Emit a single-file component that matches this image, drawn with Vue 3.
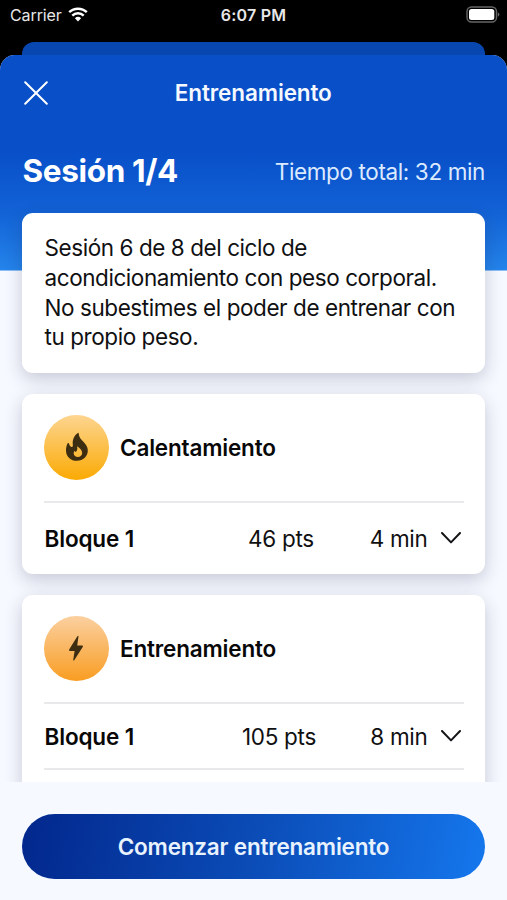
<script setup>
const sections = [
  { title: 'Calentamiento', kind: 'fire', more: false, blocks: [{ name: 'Bloque 1', points: '46 pts', time: '4 min' }] },
  { title: 'Entrenamiento', kind: 'bolt', more: true, blocks: [{ name: 'Bloque 1', points: '105 pts', time: '8 min' }] },
]
</script>

<template>
  <div class="phone">
    <div class="status">
      <div class="carrier">
        <span>Carrier</span>
        <svg class="wifi" viewBox="0 0 20 15" width="20" height="15">
          <path d="M1.2 5.2 A12.8 12.8 0 0 1 18.8 5.2" />
          <path d="M4.3 8.6 A8.2 8.2 0 0 1 15.7 8.6" />
          <path class="dot" d="M10 14.4 L6.9 11.3 A4.5 4.5 0 0 1 13.1 11.3 Z" />
        </svg>
      </div>
      <span class="clock">6:07 PM</span>
      <svg class="battery" viewBox="0 0 34 17" width="34" height="17">
        <rect x="1" y="1" width="29.5" height="15" rx="4.5" class="case" />
        <rect x="3" y="3" width="25.3" height="11" rx="2.5" fill="#fff" />
        <path d="M31.8 6.2 Q33.4 7 33.4 8.5 Q33.4 10 31.8 10.8 Z" fill="#666" />
      </svg>
    </div>
    <div class="behind"></div>
    <main class="sheet">
      <div class="scroll">
        <header class="nav">
          <svg class="close" viewBox="0 0 24 24" width="24" height="24">
            <path d="M1.2 1.2 L22.8 22.8 M22.8 1.2 L1.2 22.8" />
          </svg>
          <h1>Entrenamiento</h1>
          <span></span>
        </header>
        <div class="session">
          <h2>Sesión 1/4</h2>
          <span class="total">Tiempo total: 32 min</span>
        </div>
        <div class="cards">
          <section class="card intro">
            <p>Sesión 6 de 8 del ciclo de<br />acondicionamiento con peso corporal.<br />No subestimes el poder de entrenar con<br />tu propio peso.</p>
          </section>
          <section v-for="s in sections" :key="s.title" class="card">
            <div class="heading">
              <div class="badge" :class="s.kind">
                <svg v-if="s.kind === 'fire'" viewBox="0 0 24 30" width="24" height="30">
                  <path fill-rule="evenodd" d="M12.9 .9 C13.4 .6 13.7 1 13.7 1.6 C13.9 5.4 16 7.4 18.6 10 C21.1 12.5 22.8 15 22.8 18.6 C22.8 24.5 18.2 28.8 12 28.8 C5.8 28.8 1 24.6 1 18.4 C1 15.6 1.6 13.2 2.7 11.3 C3.1 10.7 3.8 10.8 4 11.5 C4.4 13.2 5.2 14.6 6.6 15 C7.8 15.2 8 14.2 7.8 12.6 C7.3 7.6 9.2 3.2 12.9 .9 Z M12 14.2 C13 17.2 11.9 18.5 10.8 20 C10.2 19.7 9.7 19.2 9.5 18.7 C8.9 19.7 8.6 20.6 8.7 21.6 C8.9 23.8 10.6 25.1 12.8 25.1 C15.4 25.1 17.3 23.3 17.2 20.8 C17 17.7 14.5 15.8 12 14.2 Z" />
                </svg>
                <svg v-else viewBox="0 0 16 27" width="16" height="27">
                  <path d="M9.4 1.3 Q10.7 .1 10.4 1.9 L9.2 10.5 L14.2 10.5 Q15.6 10.8 14.7 12 L6.4 25 Q5.1 26.5 5.3 24.6 L6.6 15.9 L1.8 15.9 Q.4 15.6 1.3 14.3 Z" />
                </svg>
              </div>
              <h3>{{ s.title }}</h3>
            </div>
            <div v-for="b in s.blocks" :key="b.name" class="block" :class="{ single: !s.more }">
              <strong>{{ b.name }}</strong>
              <span class="points">{{ b.points }}</span>
              <span class="time">{{ b.time }}</span>
              <svg class="chevron" viewBox="0 0 20 12" width="20" height="12">
                <path d="M1 1 L10 10.4 L19 1" />
              </svg>
            </div>
            <div v-if="s.more" class="block"></div>
          </section>
        </div>
      </div>
      <footer>
        <button type="button">Comenzar entrenamiento</button>
      </footer>
    </main>
  </div>
</template>

<style>
body {
  margin: 0;
  background: #000;
}
</style>

<style scoped>
.phone {
  width: 507px;
  height: 900px;
  overflow: hidden;
  display: flex;
  flex-direction: column;
  background: #000;
  color: #101012;
  font-family: Inter, "Liberation Sans", sans-serif;
  font-size: 22.5px;
  letter-spacing: -0.43px;
}
h1, h2, h3, p {
  margin: 0;
}
svg {
  display: block;
}
.status {
  height: 30px;
  flex: none;
  margin-bottom: 11.5px;
  padding: 0 8px 0 10px;
  display: grid;
  grid-template-columns: 1fr auto 1fr;
  align-items: center;
  color: #e8e8e8;
  font-size: 16px;
  letter-spacing: -0.1px;
}
.carrier {
  display: flex;
  align-items: center;
  gap: 6px;
}
.wifi {
  margin-top: -1px;
}
.wifi path {
  fill: none;
  stroke: #fff;
  stroke-width: 2.5;
}
.wifi .dot {
  fill: #fff;
  stroke: none;
}
.clock {
  margin-right: 2px;
  font-weight: 600;
  letter-spacing: 0.2px;
}
.battery {
  justify-self: end;
  margin: -2px -1px 0 0;
}
.battery .case {
  fill: none;
  stroke: #666;
  stroke-width: 1.4;
}
.behind {
  height: 13.5px;
  flex: none;
  margin: 0 22px;
  border-radius: 12px 12px 0 0;
  background: #0747af;
}
.sheet {
  flex: 1;
  min-height: 0;
  display: flex;
  flex-direction: column;
  overflow: hidden;
  border-radius: 15px 15px 0 0;
  background: #f6f9ff;
}
.scroll {
  height: 727px;
  flex: none;
  overflow: hidden;
  background: linear-gradient(#084fc8 0, #084fc8 95px, #1261d5 155px, #2484eb 215px) 0 0 / 100% 215.5px no-repeat;
}
.nav {
  height: 75px;
  padding: 0 24.5px 0 24px;
  display: grid;
  grid-template-columns: 1fr auto 1fr;
  align-items: center;
  color: #f4f8ff;
}
.close path {
  fill: none;
  stroke: #fff;
  stroke-width: 2;
  stroke-linecap: round;
}
h1 {
  font-size: 22.5px;
  font-weight: 600;
  letter-spacing: -0.12px;
}
.session {
  height: 82.5px;
  padding: 0 22px 0 22.5px;
  display: flex;
  align-items: center;
  justify-content: space-between;
  color: #fff;
}
h2 {
  font-size: 31.5px;
  font-weight: 700;
  letter-spacing: -0.35px;
  line-height: 36px;
}
.total {
  color: #dceaff;
  letter-spacing: -0.38px;
}
.cards {
  padding: 0 22px;
  display: flex;
  flex-direction: column;
  gap: 21.5px;
}
.card {
  flex: none;
  padding: 0 21.5px 0 22px;
  border-radius: 11px;
  background: #fff;
  box-shadow: 0 6px 18px rgba(30, 30, 70, 0.22);
}
.intro {
  height: 160px;
  display: flex;
  align-items: center;
  padding-left: 22.5px;
}
.intro p {
  white-space: nowrap;
  line-height: 29.7px;
}
.heading {
  height: 107px;
  display: flex;
  align-items: center;
  gap: 11px;
}
.badge {
  width: 65px;
  height: 65px;
  border-radius: 50%;
  display: grid;
  place-items: center;
}
.badge svg {
  fill: #3d2e12;
}
.fire {
  background: linear-gradient(#fdd590, #fbaa04);
}
.fire svg {
  margin-bottom: 1px;
}
.bolt {
  background: linear-gradient(#fbd0a0, #f99d22);
}
.bolt svg {
  margin-right: 1px;
}
h3 {
  color: #080809;
  font-size: 22.5px;
  font-weight: 600;
  letter-spacing: -0.18px;
}
.block {
  height: 66px;
  box-sizing: border-box;
  border-top: 2px solid #e9e9eb;
  display: grid;
  grid-template-columns: 168px 138px 77.5px 1fr;
  align-items: center;
}
.block.single {
  height: 72.5px;
}
.block strong {
  padding-left: 0.5px;
  color: #080809;
  font-weight: 600;
  letter-spacing: -0.15px;
}
.points {
  text-align: center;
}
.points,
.time {
  letter-spacing: -0.3px;
}
.block:not(.single) .points {
  margin-right: 4px;
}
.time {
  text-align: right;
}
.chevron {
  margin-left: 13.5px;
}
.chevron path {
  fill: none;
  stroke: #151517;
  stroke-width: 2;
  stroke-linecap: round;
  stroke-linejoin: round;
}
footer {
  flex: 1;
  padding: 32px 22px 0;
  background: #f6f9ff;
}
button {
  width: 100%;
  height: 65px;
  padding: 0;
  border: 0;
  border-radius: 33px;
  background: linear-gradient(100deg, #02278c, #0b4cb7 50%, #1577ed);
  color: #e8f3ff;
  font: inherit;
  font-weight: 600;
  letter-spacing: -0.2px;
}
</style>
